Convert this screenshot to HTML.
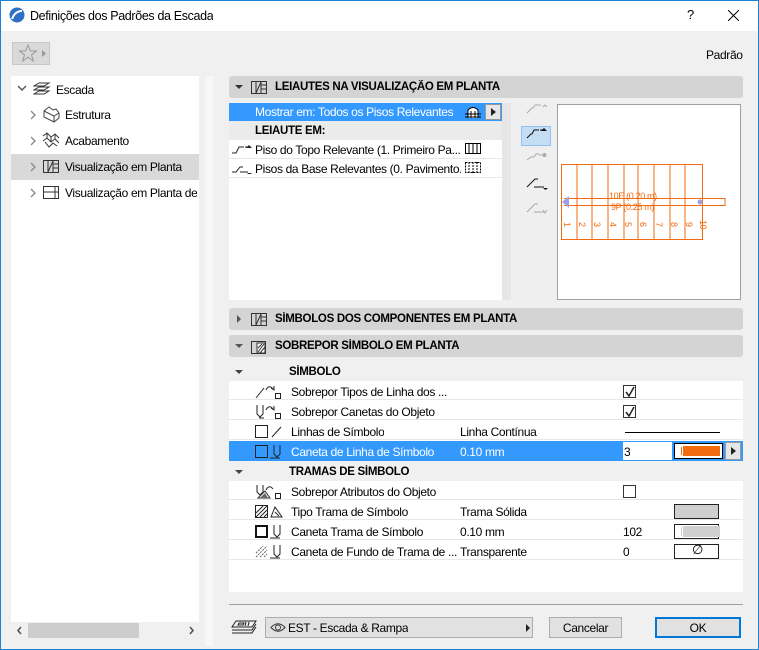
<!DOCTYPE html>
<html><head><meta charset="utf-8"><style>
*{margin:0;padding:0;box-sizing:border-box}
body{width:759px;height:650px;overflow:hidden;background:#f0f0f0;font-family:"Liberation Sans",sans-serif;font-size:12px;letter-spacing:-0.35px;color:#000;position:relative}
.a{position:absolute}
.t{position:absolute;white-space:nowrap;line-height:14px;overflow:hidden}
.hdr{position:absolute;left:229px;width:514px;height:22px;background:#d4d4d4;border-radius:3px}
.row{position:absolute;left:229px;width:514px;height:19px;background:#fff;border-bottom:1px solid #e8e8e8}
.cb{position:absolute;width:13px;height:13px;border:1px solid #333;background:#fff}
.sw{position:absolute;width:45px;height:15px;border:1px solid #222;background:#fff}
.b{font-weight:bold;font-size:11.5px;letter-spacing:-0.3px}
</style></head><body>
<div class="a" style="left:0;top:0;width:759px;height:650px;border:1px solid #1883d7;z-index:50;pointer-events:none"></div>
<div class="a" style="left:0;top:0;width:759px;height:31px;background:#fff"></div>
<svg class="a" style="left:9px;top:7px" width="16" height="16"><circle cx="8" cy="8" r="7.5" fill="#2f6fc4"/><path d="M3 12 Q6 4 13 4" stroke="#fff" stroke-width="2" fill="none"/></svg>
<div class="t" style="left:30px;top:9px;font-size:12.5px">Definições dos Padrões da Escada</div>
<div class="t" style="left:687px;top:8px;font-size:13px">?</div>
<svg class="a" style="left:728px;top:10px" width="11" height="11"><path d="M0 0L11 11M11 0L0 11" stroke="#000" stroke-width="1"/></svg>
<div class="a" style="left:12px;top:42px;width:38px;height:23px;background:#d9d9d9;border:1px solid #c8c8c8"></div>
<svg class="a" style="left:18px;top:44px" width="20" height="18"><path d="M10 1L12.4 7H18.5L13.5 10.8L15.4 17L10 13.2L4.6 17L6.5 10.8L1.5 7H7.6Z" fill="none" stroke="#999"/></svg>
<svg class="a" style="left:42px;top:50px" width="5" height="7"><path d="M0 0L4 3.5L0 7Z" fill="#999"/></svg>
<div class="t" style="left:706px;top:48px">Padrão</div>
<!-- left panel -->
<div class="a" style="left:11px;top:76px;width:188px;height:546px;background:#fff"></div>
<div class="a" style="left:11px;top:154px;width:188px;height:26px;background:#d9d9d9"></div>
<svg class="a" style="left:17px;top:85px" width="10" height="8"><path d="M1 1L5 5L9 1" stroke="#555" fill="none" stroke-width="1.4"/></svg>
<svg class="a" style="left:33px;top:82px" width="18" height="14"><path d="M1 4L6 1H16L11 4ZM1 8L6 5H16L11 8ZM1 12L6 9H16L11 12Z" fill="none" stroke="#333"/></svg>
<div class="t" style="left:56px;top:83px">Escada</div>
<svg class="a" style="left:30px;top:110px" width="6" height="10"><path d="M1 1L5 5L1 9" stroke="#888" fill="none" stroke-width="1.3"/></svg>
<svg class="a" style="left:42px;top:106px" width="18" height="17"><path d="M2 5L7 1L11 4L14 3L17 7V12L12 16L2 11Z M2 5L12 10V16 M12 10L17 7" fill="none" stroke="#444"/></svg>
<div class="t" style="left:65px;top:108px">Estrutura</div>
<svg class="a" style="left:30px;top:136px" width="6" height="10"><path d="M1 1L5 5L1 9" stroke="#888" fill="none" stroke-width="1.3"/></svg>
<svg class="a" style="left:42px;top:132px" width="18" height="16"><path d="M1 4L5 1L9 5L13 2L17 6M1 9L5 6L9 10L13 7L17 11M5 1V6M9 5V10M13 2V7M3 10L7 15L11 11L15 14" fill="none" stroke="#333"/></svg>
<div class="t" style="left:65px;top:134px">Acabamento</div>
<svg class="a" style="left:30px;top:162px" width="6" height="10"><path d="M1 1L5 5L1 9" stroke="#888" fill="none" stroke-width="1.3"/></svg>
<svg class="a" style="left:43px;top:160px" width="16" height="13"><rect x="0.5" y="0.5" width="15" height="12" fill="none" stroke="#333"/><path d="M5 0V13M10 0V13M5 12L10 1M10 4H16M10 8H16" stroke="#333"/></svg>
<div class="t" style="left:65px;top:160px">Visualização em Planta</div>
<svg class="a" style="left:30px;top:188px" width="6" height="10"><path d="M1 1L5 5L1 9" stroke="#888" fill="none" stroke-width="1.3"/></svg>
<svg class="a" style="left:43px;top:186px" width="16" height="13"><rect x="0.5" y="0.5" width="15" height="12" fill="none" stroke="#333"/><path d="M0 6H16M12 0V13" stroke="#333"/></svg>
<div class="t" style="left:65px;top:186px;width:132px">Visualização em Planta de</div>
<div class="a" style="left:28px;top:623px;width:111px;height:15px;background:#cdcdcd"></div>
<svg class="a" style="left:16px;top:626px" width="7" height="9"><path d="M5 1L2 4.5L5 8" stroke="#555" fill="none" stroke-width="1.6"/></svg>
<svg class="a" style="left:188px;top:626px" width="7" height="9"><path d="M2 1L5 4.5L2 8" stroke="#555" fill="none" stroke-width="1.6"/></svg>
<div class="a" style="left:205px;top:76px;width:8px;height:570px;background:#f7f7f7"></div>

<!-- header 1 -->
<div class="hdr" style="top:76px"></div>
<svg class="a" style="left:235px;top:85px" width="8" height="5"><path d="M0 0H8L4 4Z" fill="#333"/></svg>
<svg class="a" style="left:251px;top:81px" width="16" height="13"><rect x="0.5" y="0.5" width="15" height="12" fill="none" stroke="#333"/><path d="M5 0V13M10 0V13M5 12L10 1M10 4H16M10 8H16" stroke="#333"/></svg>
<div class="t b" style="left:275px;top:80px">LEIAUTES NA VISUALIZAÇÃO EM PLANTA</div>
<!-- list -->
<div class="a" style="left:229px;top:103px;width:273px;height:197px;background:#fff"></div>
<div class="a" style="left:229px;top:103px;width:273px;height:18px;background:#3399ff"></div>
<div class="t" style="left:255px;top:105px;color:#fff;width:205px">Mostrar em: Todos os Pisos Relevantes</div>
<svg class="a" style="left:465px;top:105px" width="16" height="14"><path d="M3 13V5Q8 0 13 5V13M0 9H16M0 12H16M6 6V13M10 6V13" stroke="#000" fill="#fff"/></svg>
<div class="a" style="left:485px;top:104px;width:16px;height:16px;background:#e6e6e6;border:1px solid #999"></div>
<svg class="a" style="left:491px;top:108px" width="5" height="8"><path d="M0 0L5 4L0 8Z" fill="#222"/></svg>
<div class="a" style="left:229px;top:121px;width:273px;height:19px;background:#ebebeb"></div>
<div class="t b" style="left:255px;top:124px">LEIAUTE EM:</div>
<div class="a" style="left:229px;top:140px;width:273px;height:19px;border-bottom:1px solid #e6e6e6"></div>
<svg class="a" style="left:231px;top:142px" width="21" height="12"><path d="M1 11H5L8 5H13M14 5H17" stroke="#222" fill="none"/><path d="M18 3L21 6H15Z" fill="#222"/></svg>
<div class="t" style="left:255px;top:143px;width:205px">Piso do Topo Relevante (1. Primeiro Pa...</div>
<svg class="a" style="left:465px;top:143px" width="16" height="11"><rect x="0.5" y="0.5" width="15" height="10" fill="none" stroke="#000"/><path d="M4 0V11M8 0V11M12 0V11" stroke="#000"/></svg>
<div class="a" style="left:229px;top:159px;width:273px;height:19px;border-bottom:1px solid #e6e6e6"></div>
<svg class="a" style="left:231px;top:162px" width="21" height="12"><path d="M1 10H5L9 5H12M9 10H17" stroke="#222" fill="none"/><path d="M16 11H21L18.5 13Z" fill="#222"/></svg>
<div class="t" style="left:255px;top:162px;width:206px">Pisos da Base Relevantes (0. Pavimento...</div>
<svg class="a" style="left:465px;top:162px" width="16" height="11"><rect x="0.5" y="0.5" width="15" height="10" fill="none" stroke="#000" stroke-dasharray="2 1"/><path d="M4 0V11M8 0V11M12 0V11" stroke="#000" stroke-dasharray="2 1"/></svg>
<!-- icon column -->
<div class="a" style="left:502px;top:103px;width:9px;height:197px;background:#e6e6e6"></div>
<div class="a" style="left:511px;top:103px;width:43px;height:197px;background:#efefef"></div>
<div class="a" style="left:521px;top:126px;width:30px;height:20px;background:#c4ddf3;border:1px solid #8fc2ee"></div>
<svg class="a" style="left:525px;top:104px" width="24" height="115"><g fill="none" stroke="#aaa"><path d="M2 9L7 4H8L10 1H16M18 3L20 1L22 3"/><path d="M2 56L6 53H9L11 50H14M14 51H19"/><path d="M2 108L6 104L10 100H13M9 108H20M18 106L20 109L22 106"/></g><circle cx="19.5" cy="51" r="2" fill="#aaa"/><g stroke="#111" fill="none"><path d="M2 34L6 30H7L9 26H14M15 26H18"/><path d="M2 83L6 79L10 75H13M9 83H19"/></g><path d="M19 24L22 27H16Z" fill="#111"/><path d="M18 84H23L20.5 86Z" fill="#111"/></svg>
<!-- preview -->
<div class="a" style="left:557px;top:104px;width:184px;height:196px;background:#fff;border:1px solid #a0a0a0"></div>
<svg class="a" style="left:557px;top:104px" width="184" height="196"><g stroke="#f26b0f" fill="none" stroke-width="1"><rect x="4.5" y="60.5" width="141" height="75"/><path d="M20 60V135M35 60V135M51 60V135M67 60V135M81 60V135M97 60V135M113 60V135M128 60V135"/><path d="M7 94.5H168V101.5H7"/></g><path d="M5 98L12 92V104Z" fill="#9fa0e8"/><circle cx="143" cy="98" r="2.5" fill="#9fa0e8"/><g fill="#f26b0f" font-size="9" font-family="Liberation Sans"><text x="52" y="95">10E (0.20 m)</text><text x="54" y="106">9P (0.25 m)</text><g transform="rotate(90)"><text x="118" y="-7">1</text><text x="118" y="-22">2</text><text x="118" y="-37">3</text><text x="118" y="-53">4</text><text x="118" y="-68">5</text><text x="118" y="-83">6</text><text x="118" y="-99">7</text><text x="118" y="-114">8</text><text x="118" y="-129">9</text><text x="116" y="-143">10</text></g></g></svg>

<!-- header 2 -->
<div class="hdr" style="top:308px"></div>
<svg class="a" style="left:237px;top:315px" width="5" height="8"><path d="M0 0L4 4L0 8Z" fill="#555"/></svg>
<svg class="a" style="left:251px;top:313px" width="16" height="13"><rect x="0.5" y="0.5" width="15" height="12" fill="none" stroke="#333"/><path d="M5 0V13M10 0V13M5 12L10 1M10 4H16M10 8H16" stroke="#333"/></svg>
<div class="t b" style="left:275px;top:312px">SÍMBOLOS DOS COMPONENTES EM PLANTA</div>
<!-- header 3 -->
<div class="hdr" style="top:335px"></div>
<svg class="a" style="left:235px;top:344px" width="8" height="5"><path d="M0 0H8L4 4Z" fill="#555"/></svg>
<svg class="a" style="left:251px;top:339px" width="17" height="15"><rect x="0.5" y="2.5" width="14" height="12" fill="none" stroke="#333"/><path d="M6 4H14V14H6Z" fill="#fff" stroke="#333"/><path d="M7 13L13 5M7 9L11 5M9 14L14 8" stroke="#333"/></svg>
<div class="t b" style="left:275px;top:339px">SOBREPOR SÍMBOLO EM PLANTA</div>

<svg class="a" style="left:235px;top:370px" width="8" height="5"><path d="M0 0H8L4 4Z" fill="#444"/></svg>
<div class="t b" style="left:289px;top:365px">SÍMBOLO</div>
<div class="a" style="left:229px;top:381px;width:514px;height:211px;background:#fff"></div>
<div class="row" style="top:381px"></div>
<div class="row" style="top:401px"></div>
<div class="row" style="top:421px"></div>
<div class="a" style="left:229px;top:441px;width:514px;height:20px;background:#3399ff"></div>
<div class="a" style="left:229px;top:461px;width:514px;height:21px;background:#f0f0f0"></div>
<div class="row" style="top:481px"></div>
<div class="row" style="top:501px"></div>
<div class="row" style="top:521px"></div>
<div class="row" style="top:541px"></div>

<svg class="a" style="left:255px;top:384px" width="30" height="16"><path d="M1 14L9 4" stroke="#222"/><path d="M11 6Q14 0 18 5" stroke="#222" fill="none"/><path d="M16 4L19 6L19 2" stroke="#222" fill="none"/><rect x="20.5" y="9.5" width="5" height="5" fill="none" stroke="#222"/></svg>
<div class="t" style="left:291px;top:385px">Sobrepor Tipos de Linha dos ...</div>
<div class="cb" style="left:623px;top:385px"></div>
<svg class="a" style="left:624px;top:386px" width="12" height="12"><path d="M2 6L5 10L10 1" stroke="#222" fill="none" stroke-width="1.5"/></svg>

<svg class="a" style="left:255px;top:404px" width="30" height="16"><path d="M2 1V10L5 13L8 10V1M4 14H9" stroke="#222" fill="none"/><path d="M11 6Q14 0 18 5" stroke="#222" fill="none"/><path d="M16 4L19 6L19 2" stroke="#222" fill="none"/><rect x="20.5" y="9.5" width="5" height="5" fill="none" stroke="#222"/></svg>
<div class="t" style="left:291px;top:405px">Sobrepor Canetas do Objeto</div>
<div class="cb" style="left:623px;top:405px"></div>
<svg class="a" style="left:624px;top:406px" width="12" height="12"><path d="M2 6L5 10L10 1" stroke="#222" fill="none" stroke-width="1.5"/></svg>

<svg class="a" style="left:255px;top:424px" width="30" height="16"><rect x="0.5" y="1.5" width="12" height="12" fill="none" stroke="#222"/><path d="M17 13L26 3" stroke="#222"/></svg>
<div class="t" style="left:291px;top:425px">Linhas de Símbolo</div>
<div class="t" style="left:460px;top:425px">Linha Contínua</div>
<div class="a" style="left:625px;top:432px;width:95px;height:1px;background:#000"></div>

<svg class="a" style="left:255px;top:444px" width="30" height="16"><rect x="0.5" y="1.5" width="12" height="12" fill="none" stroke="#222"/><path d="M19 1V10L22 13L25 10V1M15 14H25" stroke="#222" fill="none"/></svg>
<div class="t" style="left:291px;top:445px;color:#fff">Caneta de Linha de Símbolo</div>
<div class="t" style="left:460px;top:445px;color:#fff">0.10 mm</div>
<div class="a" style="left:623px;top:442px;width:49px;height:18px;background:#fff"></div>
<div class="t" style="left:624px;top:445px">3</div>
<div class="a" style="left:674px;top:443px;width:49px;height:16px;background:#fff;border:1px solid #000"></div>
<div class="a" style="left:681px;top:447px;width:1px;height:8px;background:#f26b0f"></div>
<div class="a" style="left:683px;top:446px;width:37px;height:10px;background:#f26b0f"></div>
<div class="a" style="left:725px;top:442px;width:16px;height:18px;background:#e6e6e6;border:1px solid #999"></div>
<svg class="a" style="left:731px;top:447px" width="5" height="8"><path d="M0 0L5 4L0 8Z" fill="#222"/></svg>

<svg class="a" style="left:235px;top:470px" width="8" height="5"><path d="M0 0H8L4 4Z" fill="#444"/></svg>
<div class="t b" style="left:289px;top:465px">TRAMAS DE SÍMBOLO</div>

<svg class="a" style="left:255px;top:484px" width="30" height="16"><path d="M2 1V8L5 11L8 8V1" stroke="#222" fill="none"/><path d="M3 14L10 7L15 14Z" fill="none" stroke="#333"/><path d="M5 14L10 9L13 14Z" fill="#666"/><path d="M11 6Q14 0 18 5" stroke="#222" fill="none"/><rect x="20.5" y="9.5" width="5" height="5" fill="none" stroke="#222"/></svg>
<div class="t" style="left:291px;top:485px">Sobrepor Atributos do Objeto</div>
<div class="cb" style="left:623px;top:485px"></div>

<svg class="a" style="left:255px;top:504px" width="30" height="16"><rect x="0.5" y="1.5" width="12" height="12" fill="#fff" stroke="#222"/><path d="M1 9L8 2M1 13L12 2M5 13L12 6M9 13L12 10" stroke="#222"/><path d="M16 13L20 3L27 13Z M20 8L24 12" stroke="#222" fill="none"/></svg>
<div class="t" style="left:291px;top:505px">Tipo Trama de Símbolo</div>
<div class="t" style="left:460px;top:505px">Trama Sólida</div>
<div class="sw" style="left:674px;top:504px;background:#cfcfcf"></div>

<svg class="a" style="left:255px;top:524px" width="30" height="16"><rect x="1" y="2" width="11" height="11" fill="none" stroke="#111" stroke-width="2"/><path d="M19 1V10L22 13L25 10V1M15 14H25" stroke="#222" fill="none"/></svg>
<div class="t" style="left:291px;top:525px">Caneta Trama de Símbolo</div>
<div class="t" style="left:460px;top:525px">0.10 mm</div>
<div class="t" style="left:623px;top:525px">102</div>
<div class="sw" style="left:674px;top:524px"></div>
<div class="a" style="left:681px;top:527px;width:1px;height:9px;background:#ccc"></div>
<div class="a" style="left:683px;top:526px;width:37px;height:11px;background:#d0d0d0"></div>

<svg class="a" style="left:255px;top:544px" width="30" height="16"><path d="M1 9L8 2M1 13L12 2M5 13L12 6M9 13L12 10" stroke="#666" stroke-dasharray="2 1"/><path d="M19 1V10L22 13L25 10V1M15 14H25" stroke="#222" fill="none"/></svg>
<div class="t" style="left:291px;top:545px;width:166px">Caneta de Fundo de Trama de ...</div>
<div class="t" style="left:460px;top:545px">Transparente</div>
<div class="t" style="left:623px;top:545px">0</div>
<div class="sw" style="left:674px;top:544px"></div>
<div class="t" style="left:692px;top:543px;font-size:13px">∅</div>

<div class="a" style="left:229px;top:604px;width:514px;height:1px;background:#a0a0a0"></div>
<svg class="a" style="left:231px;top:620px" width="26" height="16"><g fill="none" stroke="#222"><path d="M5 1H25L21 7H1Z"/><path d="M1 10H21L25 4"/><path d="M1 13H21L25 7"/><path d="M8 3H13L12 5H7Z M15 2L14 6M18 2L17 6"/></g></svg>
<div class="a" style="left:265px;top:617px;width:268px;height:21px;background:#e1e1e1;border:1px solid #adadad"></div>
<svg class="a" style="left:270px;top:622px" width="16" height="11"><path d="M1 5.5Q8 -2 15 5.5Q8 13 1 5.5Z" fill="none" stroke="#333"/><circle cx="8" cy="5.5" r="2.5" fill="none" stroke="#333"/></svg>
<div class="t" style="left:288px;top:621px">EST - Escada &amp; Rampa</div>
<svg class="a" style="left:526px;top:624px" width="5" height="8"><path d="M0 0L4 4L0 8Z" fill="#222"/></svg>
<div class="a" style="left:549px;top:617px;width:73px;height:21px;background:#e1e1e1;border:1px solid #adadad"></div>
<div class="t" style="left:549px;top:621px;width:73px;text-align:center">Cancelar</div>
<div class="a" style="left:655px;top:617px;width:86px;height:21px;background:#e1e1e1;border:2px solid #0078d7"></div>
<div class="t" style="left:655px;top:621px;width:86px;text-align:center">OK</div>
</body></html>
